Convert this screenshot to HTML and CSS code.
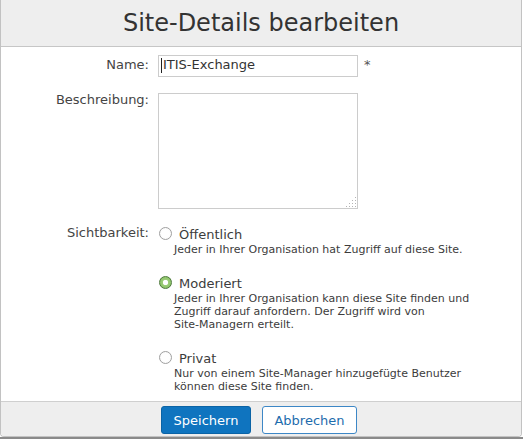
FILE: index.html
```html
<!DOCTYPE html>
<html lang="de">
<head>
<meta charset="utf-8">
<title>Site-Details bearbeiten</title>
<link rel="stylesheet" href="styles.css">
</head>
<body>
<div class="dialog">
  <div class="dialog-header">Site-Details bearbeiten</div>
  <div class="dialog-body">
    <div class="row row-name">
      <div class="label">Name:</div>
      <div class="text-field"><span class="caret"></span>ITIS-Exchange</div>
      <span class="required">*</span>
    </div>
    <div class="row row-desc">
      <div class="label">Beschreibung:</div>
      <div class="textarea-wrap">
        <textarea class="textarea"></textarea>
        <svg class="grip" width="12" height="12" viewBox="0 0 12 12">
          <g fill="#b4b4b4">
            <rect x="10" y="1" width="1" height="1"/>
            <rect x="7" y="4" width="1" height="1"/><rect x="10" y="4" width="1" height="1"/>
            <rect x="4" y="7" width="1" height="1"/><rect x="7" y="7" width="1" height="1"/><rect x="10" y="7" width="1" height="1"/>
            <rect x="1" y="10" width="1" height="1"/><rect x="4" y="10" width="1" height="1"/><rect x="7" y="10" width="1" height="1"/><rect x="10" y="10" width="1" height="1"/>
          </g>
        </svg>
      </div>
    </div>
    <div class="row row-vis">
      <div class="label label-vis">Sichtbarkeit:</div>
      <div class="options">
        <div class="option">
          <div class="option-head"><span class="radio"></span><span class="option-title">Öffentlich</span></div>
          <div class="option-desc">Jeder in Ihrer Organisation hat Zugriff auf diese Site.</div>
        </div>
        <div class="option">
          <div class="option-head"><span class="radio radio-checked"></span><span class="option-title">Moderiert</span></div>
          <div class="option-desc">Jeder in Ihrer Organisation kann diese Site finden und Zugriff darauf anfordern. Der Zugriff wird von <span class="nowrap">Site-Managern</span> erteilt.</div>
        </div>
        <div class="option">
          <div class="option-head"><span class="radio"></span><span class="option-title">Privat</span></div>
          <div class="option-desc">Nur von einem <span class="nowrap">Site-Manager</span> hinzugefügte Benutzer können diese Site finden.</div>
        </div>
      </div>
    </div>
  </div>
  <div class="dialog-footer">
    <button class="btn btn-primary">Speichern</button>
    <button class="btn btn-secondary">Abbrechen</button>
  </div>
</div>
<div class="backdrop"></div>
</body>
</html>
```
FILE: styles.css
```css
html, body {
  margin: 0;
  padding: 0;
  background: #ffffff;
}
body {
  font-family: "DejaVu Sans", sans-serif;
  color: #3c3c3c;
  width: 523px;
  height: 439px;
  overflow: hidden;
}
.dialog {
  width: 520px;
  border-left: 1px solid #c2c2c2;
  border-right: 1px solid #c2c2c2;
  border-bottom: 1px solid #c2c2c2;
  border-radius: 0 0 4px 4px;
  overflow: hidden;
  background: #ffffff;
}
.dialog-header {
  height: 46px;
  line-height: 46px;
  background: #eeeeee;
  border-bottom: 1px solid #c6c6c6;
  text-align: center;
  font-size: 24px;
  color: #333333;
}
.dialog-body {
  height: 346px;
  padding-top: 8px;
  overflow: hidden;
}
.row {
  display: flex;
  gap: 9px;
}
.label {
  width: 148px;
  text-align: right;
  font-size: 13px;
  line-height: 17px;
  color: #444444;
  flex-shrink: 0;
}
.row-name {
  align-items: baseline;
}
.text-field {
  box-sizing: border-box;
  width: 200px;
  height: 22px;
  border: 1px solid #cccccc;
  padding: 0 3px 3px 2px;
  font-size: 13px;
  line-height: 17px;
  color: #333333;
  display: flex;
  align-items: baseline;
}
.caret {
  display: inline-block;
  width: 1px;
  height: 15px;
  background: #222222;
  margin-right: 1px;
  align-self: center;
  margin-top: 2px;
}
.required {
  font-size: 13px;
  color: #555555;
  margin-left: -3px;
}
.row-desc {
  margin-top: 16px;
  align-items: flex-start;
}
.row-desc .label {
  line-height: 14px;
}
.textarea-wrap {
  position: relative;
  width: 200px;
  height: 116px;
}
.textarea {
  box-sizing: border-box;
  width: 200px;
  height: 116px;
  border: 1px solid #cccccc;
  margin: 0;
  padding: 2px;
  resize: none;
  display: block;
  font-family: "DejaVu Sans", sans-serif;
  font-size: 13px;
  outline: none;
}
.grip {
  position: absolute;
  right: 1px;
  bottom: 1px;
}
.row-vis {
  margin-top: 18px;
  align-items: flex-start;
}
.label-vis {
  line-height: 12px;
}
.options {
  display: flex;
  flex-direction: column;
  gap: 20px;
}
.option-head {
  display: flex;
  align-items: flex-start;
  gap: 7px;
  height: 16px;
}
.radio {
  box-sizing: border-box;
  width: 13px;
  height: 13px;
  margin-left: 1px;
  border: 1px solid #a0a0a0;
  border-radius: 50%;
  background: radial-gradient(circle, #ffffff 0, #ffffff 50%, #f2f2f2 100%);
}
.radio-checked {
  border: 1px solid #4e7a3c;
  background: radial-gradient(circle, #ffffff 0, #ffffff 2px, #f4f9f0 2.5px, #9ccc78 3px, #8dc46a 5.5px, #6e9e52 6px);
}
.option-title {
  font-size: 13px;
  line-height: 16px;
  color: #3c3c3c;
}
.option-desc {
  margin-left: 16px;
  width: 310px;
  font-size: 11px;
  line-height: 13px;
  color: #3c3c3c;
}
.nowrap {
  white-space: nowrap;
}
.dialog-footer {
  border-top: 1px solid #cfcfcf;
  background: #eeeeee;
  height: 28px;
  padding: 4px 0 2px 160px;
  display: flex;
  gap: 11px;
}
.btn {
  box-sizing: border-box;
  height: 28px;
  border-radius: 3px;
  font-family: "DejaVu Sans", sans-serif;
  font-size: 13px;
  padding: 0;
  cursor: pointer;
}
.btn-primary {
  width: 90px;
  background: #0f74bf;
  border: 1px solid #0b63a5;
  color: #ffffff;
}
.btn-secondary {
  width: 95px;
  background: #ffffff;
  border: 1px solid #3d87c6;
  color: #1d6cad;
}
.backdrop {
  height: 2px;
  background: #8a8a8a;
}
```
